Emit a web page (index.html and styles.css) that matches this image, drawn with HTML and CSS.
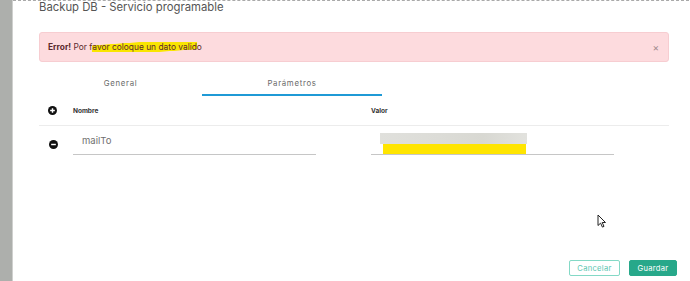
FILE: index.html
```html
<!DOCTYPE html>
<html lang="es">
<head>
    <meta charset="UTF-8">
    <title>Backup DB - Servicio programable</title>
    <link rel="stylesheet" href="styles.css">
</head>
<body>

<div class="page">
    <div class="backdrop"></div>
    <div class="modal">
        <h1 class="modal-title">Backup DB - Servicio programable</h1>

        <div class="alert">
            <span class="alert-text"><b>Error!</b> Por f<span class="marker">avor coloque un dato valid</span>o</span>
            <span class="alert-close">&times;</span>
        </div>

        <div class="tabs">
            <div class="tab tab-general">General</div>
            <div class="tab tab-params active">Parámetros</div>
        </div>

        <div class="params">
            <div class="params-head">
                <span class="icon-btn">
                    <svg width="9" height="9" viewBox="0 0 10 10"><circle cx="5" cy="5" r="5" fill="#111"/><path d="M5 2.4v5.2M2.4 5h5.2" stroke="#fff" stroke-width="1.6"/></svg>
                </span>
                <div class="col">Nombre</div>
                <div class="col">Valor</div>
            </div>
            <div class="params-row">
                <span class="icon-btn row-icon">
                    <svg width="9" height="9" viewBox="0 0 10 10"><circle cx="5" cy="5" r="5" fill="#111"/><path d="M2.4 5h5.2" stroke="#fff" stroke-width="1.6"/></svg>
                </span>
                <div class="col">
                    <input type="text" class="field" value="mailTo">
                </div>
                <div class="col">
                    <div class="field field-value">
                        <span class="blur-box"></span>
                        <span class="yellow-box"></span>
                    </div>
                </div>
            </div>
        </div>

        <div class="actions">
            <button type="button" class="btn btn-outline">Cancelar</button>
            <button type="button" class="btn btn-primary">Guardar</button>
        </div>

        <svg class="cursor" width="9" height="14" viewBox="0 0 9 14"><path d="M1 1v10.5l2.6-2.4 1.8 4 1.6-.7-1.8-3.9H8.5z" fill="#fff" stroke="#222" stroke-width="1"/></svg>
    </div>
</div>

</body>
</html>
```

FILE: styles.css
```css
html, body {
    margin: 0;
    height: 100%;
}
body {
    font-family: Inter, "Noto Sans", sans-serif;
    background-color: #fff;
    overflow: hidden;
}
.page {
    display: flex;
    height: 281px;
}
.backdrop {
    width: 12px;
    background-color: #adafac;
    border-right: 1px solid #cfd0ce;
    flex-shrink: 0;
}
.modal {
    position: relative;
    flex: 1;
    display: flex;
    flex-direction: column;
    padding: 0 25px 5px 26px;
    border-top: 1px dashed #a9a9a9;
}
.modal-title {
    margin: 0;
    font-size: 11.3px;
    font-weight: 400;
    line-height: 13px;
    color: #555;
}
.alert {
    display: flex;
    align-items: center;
    justify-content: space-between;
    height: 30px;
    box-sizing: border-box;
    margin-top: 18px;
    padding: 0 9px 0 8px;
    background-color: #fddbde;
    border: 1px solid #f7cdd1;
    border-radius: 3px;
    font-size: 8.4px;
    color: #5b2a2d;
}
.alert-text b {
    font-weight: 700;
}
.marker {
    background: linear-gradient(176deg, transparent 18%, #f9e500 22%, #f9e500 82%, transparent 86%);
}
.alert-close {
    font-size: 10px;
    color: #a08a8c;
}
.tabs {
    display: flex;
}
.tab {
    height: 34px;
    box-sizing: border-box;
    padding-top: 16px;
    font-size: 7.8px;
    line-height: 10px;
    letter-spacing: 0.7px;
    color: #6a6a6a;
    text-align: center;
    border-bottom: 2px solid transparent;
}
.tab-general {
    width: 163px;
}
.tab-params {
    width: 180px;
}
.tab.active {
    border-bottom-color: #1f9ad6;
}
.params-head {
    display: flex;
    align-items: center;
    height: 29px;
    border-bottom: 1px solid #ececec;
    font-size: 6.5px;
    font-weight: 700;
    color: #333;
}
.params-head .icon-btn,
.params-row .icon-btn {
    width: 34px;
    padding-left: 9px;
    box-sizing: border-box;
    display: flex;
}
.col {
    width: 298px;
}
.params-row {
    display: flex;
    align-items: flex-start;
    padding-top: 4px;
}
.row-icon {
    margin-top: 10px;
    padding-left: 10px !important;
}
.field {
    display: block;
    width: 243px;
    height: 25px;
    box-sizing: border-box;
    padding: 3px 9px 7px;
    border: none;
    border-bottom: 1px solid #c6c6c6;
    font-family: Inter, "Noto Sans", sans-serif;
    font-size: 9.5px;
    line-height: 14px;
    color: #707070;
    outline: none;
}
.field-value {
    padding: 3px 0 0 9px;
}
.blur-box {
    display: block;
    width: 147px;
    height: 11px;
    background: linear-gradient(90deg, #e0e0dc 0%, #dcdcd7 40%, #d8d8d2 70%, #e2e2de 100%);
}
.yellow-box {
    display: block;
    width: 143px;
    height: 10px;
    margin-left: 3px;
    background-color: #ffe500;
}
.actions {
    margin-top: auto;
    margin-right: -8px;
    display: flex;
    justify-content: flex-end;
    gap: 9px;
}
.btn {
    height: 16px;
    padding: 0;
    font-family: Inter, "Noto Sans", sans-serif;
    font-size: 7.6px;
    letter-spacing: 0.3px;
    border-radius: 2px;
    cursor: pointer;
}
.btn-outline {
    width: 51px;
    background-color: #fff;
    border: 1px solid #84d9c6;
    color: #5cc6b1;
}
.btn-primary {
    width: 48px;
    background-color: #27a88a;
    border: 1px solid #27a88a;
    color: #fff;
}
.cursor {
    position: absolute;
    left: 584px;
    top: 213px;
}
```
